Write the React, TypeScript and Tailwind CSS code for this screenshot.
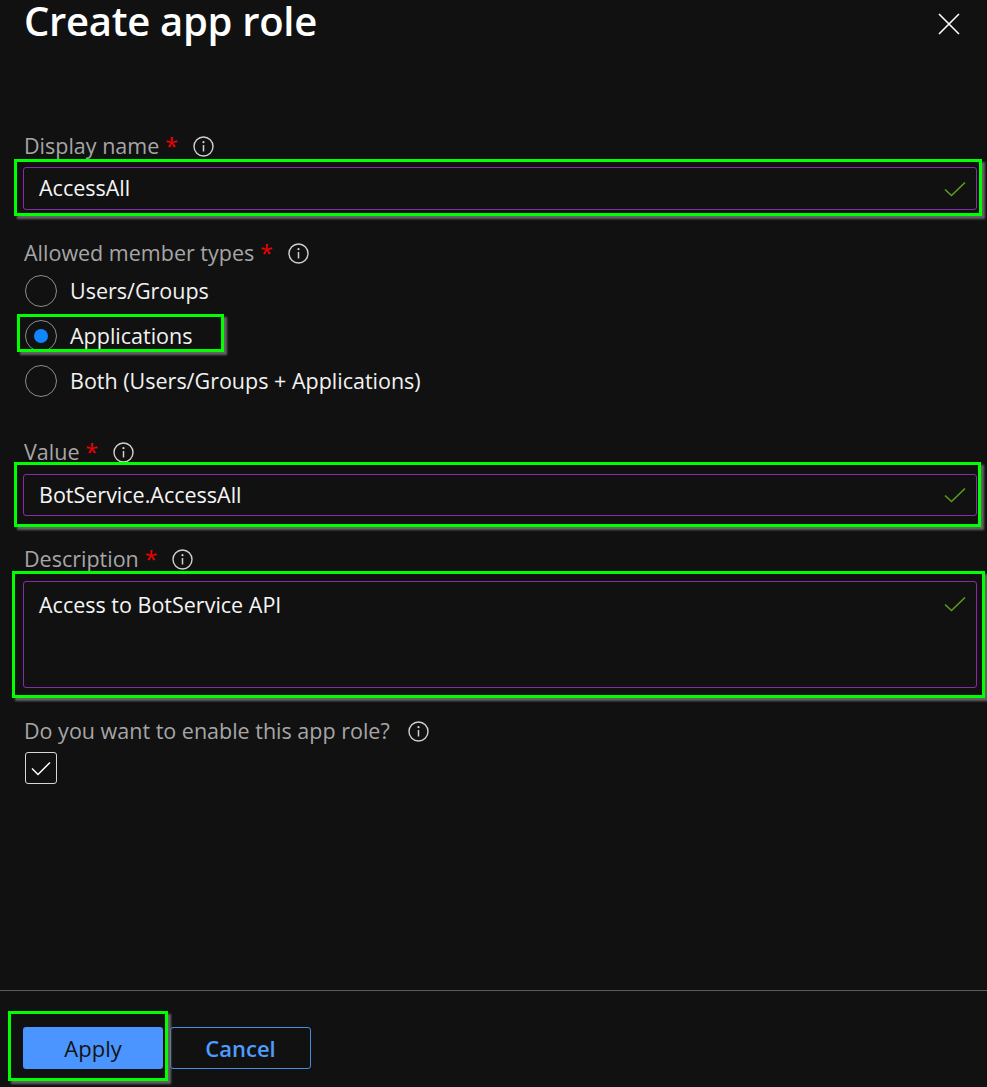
import React from "react";

const font = { fontFamily: '"Open Sans", "Noto Sans", sans-serif' };

function Info() {
  return (
    <svg width="21" height="21" viewBox="0 0 21 21" className="shrink-0">
      <circle cx="10.5" cy="10.5" r="9.5" fill="none" stroke="#d0d0d0" strokeWidth="1.4" />
      <circle cx="10.5" cy="6.2" r="1.1" fill="#d0d0d0" />
      <line x1="10.5" y1="9" x2="10.5" y2="15.5" stroke="#d0d0d0" strokeWidth="1.5" />
    </svg>
  );
}

function Label({ text, req = true }: { text: string; req?: boolean }) {
  return (
    <div className="flex items-center h-[24px] text-[21.5px] text-[#a6a6a6] leading-none">
      <span>{text}</span>
      {req && <span className="text-[#f00000] ml-[6px] text-[23px]">*</span>}
      <span className={req ? "ml-[15px]" : "ml-[18px]"}>
        <Info />
      </span>
    </div>
  );
}

function Check() {
  return (
    <svg width="22" height="16" viewBox="0 0 22 16" className="shrink-0">
      <path d="M1 8.5 L7.5 14.5 L21 1.5" fill="none" stroke="#5a9e1a" strokeWidth="1.6" />
    </svg>
  );
}

function Highlight({ l, t, r, b }: { l: number; t: number; r: number; b: number }) {
  return (
    <div
      className="absolute border-[3px] border-[#00ff00] pointer-events-none shadow-[3px_3px_2px_rgba(110,110,110,0.9)]"
      style={{ left: l, top: t, right: r, bottom: b }}
    />
  );
}

function Radio({ checked, label }: { checked?: boolean; label: string }) {
  return (
    <div className="flex items-center h-[45px]">
      <div className="w-[32px] h-[32px] rounded-full border border-[#8c8c8c] flex items-center justify-center ml-[2px]">
        {checked && <div className="w-[14px] h-[14px] rounded-full bg-[#0f86ff]" />}
      </div>
      <span className="ml-[13px] text-[21.5px] text-[#f2f2f2] leading-none">{label}</span>
    </div>
  );
}

export default function App() {
  return (
    <div className="w-[987px] h-[1087px] bg-[#111111] flex flex-col overflow-hidden" style={font}>
      <div className="flex-1 flex flex-col pl-[23px] pr-[10px]">
        <div className="flex items-start justify-between h-[50px]">
          <h1 className="text-[40px] font-semibold text-white leading-none mt-[1px] ml-[1px] tracking-[-0.3px]">
            Create app role
          </h1>
          <svg width="22" height="22" viewBox="0 0 22 22" className="mt-[13px] mr-[17px]">
            <path d="M1 1 L21 21 M21 1 L1 21" stroke="#ffffff" strokeWidth="1.6" />
          </svg>
        </div>

        <div className="mt-[84px] ml-[1px]">
          <Label text="Display name" />
        </div>
        <div className="relative mt-[9px]">
          <div className="h-[43px] border border-[#8a2aa8] rounded-[3px] flex items-center justify-between pl-[15px] pr-[10px]">
            <span className="text-[21.5px] text-[#f5f5f5]">AccessAll</span>
            <Check />
          </div>
          <Highlight l={-9} t={-8} r={-5} b={-6} />
        </div>

        <div className="mt-[31px] ml-[1px]">
          <Label text="Allowed member types" />
        </div>
        <div className="flex flex-col mt-[3px]">
          <Radio label="Users/Groups" />
          <div className="relative">
            <Radio checked label="Applications" />
            <div className="absolute left-[-6px] top-[1px] w-[207px] h-[38px] border-[3px] border-[#00ff00] shadow-[3px_3px_2px_rgba(110,110,110,0.9)]" />
          </div>
          <Radio label="Both (Users/Groups + Applications)" />
        </div>

        <div className="mt-[37px] ml-[1px]">
          <Label text="Value" />
        </div>
        <div className="relative mt-[10px]">
          <div className="h-[42px] border border-[#8a2aa8] rounded-[3px] flex items-center justify-between pl-[15px] pr-[10px]">
            <span className="text-[21.5px] text-[#f5f5f5]">BotService.AccessAll</span>
            <Check />
          </div>
          <Highlight l={-9} t={-12} r={-4} b={-11} />
        </div>

        <div className="mt-[31px] ml-[1px]">
          <Label text="Description" />
        </div>
        <div className="relative mt-[10px]">
          <div className="h-[107px] border border-[#8a2aa8] rounded-[3px] flex items-start justify-between pl-[15px] pr-[10px] pt-[7px]">
            <span className="text-[21.5px] text-[#f5f5f5]">Access to BotService API</span>
            <div className="mt-[7px]">
              <Check />
            </div>
          </div>
          <Highlight l={-11} t={-10} r={-8} b={-10} />
        </div>

        <div className="mt-[31px] ml-[1px]">
          <Label text="Do you want to enable this app role?" req={false} />
        </div>
        <div className="mt-[9px] ml-[2px] w-[32px] h-[32px] border border-[#d6d6d6] rounded-[3px] flex items-center justify-center">
          <svg width="20" height="15" viewBox="0 0 20 15">
            <path d="M1 7.5 L7 13.5 L19 1.5" fill="none" stroke="#ffffff" strokeWidth="1.5" />
          </svg>
        </div>
      </div>

      <div className="h-px bg-[#5c5c5c] mb-[36px]" />
      <div className="flex items-center gap-[7px] pl-[23px] mb-[18px]">
        <div className="relative">
          <button className="w-[140px] h-[42px] rounded-[3px] bg-[#4a95ff] text-[#141414] text-[22px] leading-none">
            Apply
          </button>
          <Highlight l={-15} t={-16} r={-5} b={-12} />
        </div>
        <button className="w-[141px] h-[42px] rounded-[3px] border border-[#4a8de0] text-[#4f9cff] text-[22px] font-semibold leading-none">
          Cancel
        </button>
      </div>
    </div>
  );
}
